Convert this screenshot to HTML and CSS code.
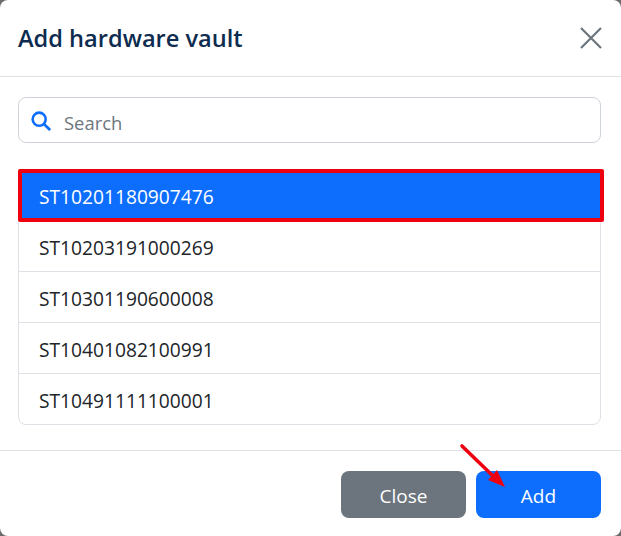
FILE: index.html
```html
<html>
<head>
  <title>Add hardware vault</title>
  <link rel="stylesheet" href="styles.css">
</head>
<body>
  <div class="modal">
    <div class="modal-header">
      <h1 class="modal-title">Add hardware vault</h1>
      <svg class="close-icon" width="22" height="22" viewBox="0 0 22 22">
        <path d="M1 1L21 21M21 1L1 21" stroke="#6c757d" stroke-width="2.2" fill="none" />
      </svg>
    </div>

    <div class="modal-body">
      <div class="search-box">
        <svg class="search-icon" width="20" height="20" viewBox="0 0 22 22">
          <circle cx="9" cy="9" r="7.2" stroke="#0d6efd" stroke-width="2.8" fill="none" />
          <path d="M14 14L21 21" stroke="#0d6efd" stroke-width="3" fill="none" />
        </svg>
        <span class="search-text">Search</span>
      </div>

      <ul class="vault-list">
        <li class="vault-item selected">ST10201180907476</li>
        <li class="vault-item">ST10203191000269</li>
        <li class="vault-item">ST10301190600008</li>
        <li class="vault-item">ST10401082100991</li>
        <li class="vault-item">ST10491111100001</li>
      </ul>
    </div>

    <div class="modal-footer">
      <button class="btn btn-close">Close</button>
      <button class="btn btn-add">Add</button>
    </div>

    <svg class="arrow" width="60" height="50" viewBox="0 0 60 50">
      <path d="M3 3L34 33" stroke="#ee0011" stroke-width="3.6" fill="none" stroke-linecap="round" />
      <path d="M46 44L29 37L38 27Z" fill="#ee0011" />
    </svg>
  </div>
</body>
</html>
```

FILE: styles.css
```css
html, body {
  margin: 0;
  padding: 0;
  height: 536px;
  overflow: hidden;
  background-color: #6b6b6b;
}

body {
  font-family: "Open Sans", "Noto Sans", sans-serif;
}

.modal {
  position: relative;
  width: 621px;
  height: 536px;
  box-sizing: border-box;
  background-color: white;
  border-radius: 8px;
}

.modal-header {
  display: flex;
  justify-content: space-between;
  align-items: center;
  height: 76px;
  padding: 0 19px 0 18px;
  border-bottom: 1px solid #dee2e6;
}

.modal-title {
  margin: 0;
  font-size: 23.6px;
  font-weight: 600;
  color: #0d2c4f;
}

.modal-body {
  padding: 20px 20px 25px 18px;
}

.search-box {
  display: flex;
  align-items: center;
  height: 46px;
  box-sizing: border-box;
  padding-left: 12px;
  margin-bottom: 26px;
  background-color: white;
  border: 1px solid #ced4da;
  border-radius: 8px;
}

.search-icon {
  margin-top: 2px;
}

.search-text {
  margin-left: 13px;
  padding-top: 5px;
  font-size: 18.4px;
  color: #6c757d;
}

.vault-list {
  list-style: none;
  margin: 0;
  padding: 0;
  border: 1px solid #dee2e6;
  border-radius: 8px;
}

.vault-item {
  display: flex;
  align-items: center;
  height: 47px;
  padding: 3px 0 0 20px;
  font-size: 19.2px;
  color: #212529;
  border-top: 1px solid #dee2e6;
}

.vault-item:first-child {
  border-top: none;
}

.vault-item.selected {
  position: relative;
  height: 43px;
  margin: -1px -4px -2px -1px;
  padding: 2px 0 0 17px;
  background-color: #0d6efd;
  color: white;
  border: 4px solid #ee0011;
  border-radius: 2px;
}

.modal-footer {
  display: flex;
  justify-content: flex-end;
  gap: 10px;
  padding: 20px 20px 0 0;
  border-top: 1px solid #dee2e6;
}

.btn {
  width: 125px;
  height: 47px;
  padding-top: 4px;
  font-family: inherit;
  font-size: 19px;
  color: white;
  border: none;
  border-radius: 8px;
}

.btn-close {
  background-color: #6c757d;
}

.btn-add {
  background-color: #0d6efd;
}

.arrow {
  position: absolute;
  left: 459px;
  top: 443px;
}
```
